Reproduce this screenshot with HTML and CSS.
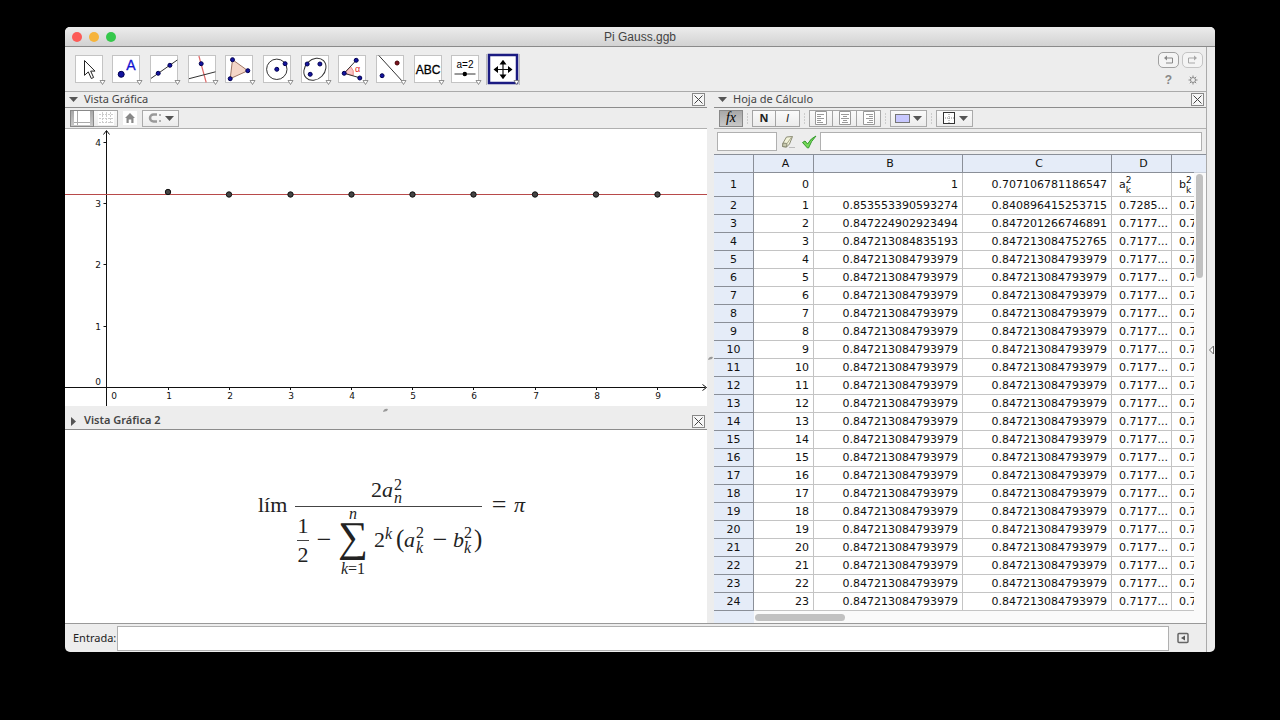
FILE: index.html
```html
<!DOCTYPE html>
<html lang="es">
<head>
<meta charset="utf-8">
<title>Pi Gauss.ggb</title>
<link rel="stylesheet" href="styles.css">
</head>
<body>
<div class="window">
  <header class="titlebar">
    <div class="lights"><span class="light close"></span><span class="light minimize"></span><span class="light zoom"></span></div>
    <h1>Pi Gauss.ggb</h1>
  </header>
  <div class="frame">
    <div class="app">
      <div class="toolbar">
        <div class="tools">
          <button class="tool" aria-label="Elige y mueve"><svg viewBox="0 0 36 36"><rect class="box" x="4.500" y="4.500" width="27" height="27"/><path d="M13.500 9.500V24.300L17.300 20.900L20.300 27.500L22.600 26.500L19.700 20.100H24Z" fill="#fff" stroke="#222"/><path class="drop" d="M29 29.500h5l-2.500 4z"/></svg></button>
          <button class="tool" aria-label="Punto"><svg viewBox="0 0 36 36"><rect class="box" x="4.500" y="4.500" width="27" height="27"/><circle class="pt" cx="13.200" cy="23.300" r="3"/><text class="tool-a" x="23" y="19">A</text><path class="drop" d="M29 29.500h5l-2.500 4z"/></svg></button>
          <button class="tool" aria-label="Recta"><svg viewBox="0 0 36 36"><rect class="box" x="4.500" y="4.500" width="27" height="27"/><path class="ink" d="M5 27.400L31.300 9"/><circle class="pt" cx="12.200" cy="22.300" r="2"/><circle class="pt" cx="23.900" cy="14.300" r="2"/><path class="drop" d="M29 29.500h5l-2.500 4z"/></svg></button>
          <button class="tool" aria-label="Perpendicular"><svg viewBox="0 0 36 36"><rect class="box" x="4.500" y="4.500" width="27" height="27"/><path d="M14.900 5L22.200 31.500" stroke="#e06a6a" stroke-width="1.200"/><path class="ink" d="M5 27.700L31.500 20.800"/><circle class="pt" cx="17.200" cy="12.700" r="2"/><path class="drop" d="M29 29.500h5l-2.500 4z"/></svg></button>
          <button class="tool" aria-label="Polígono"><svg viewBox="0 0 36 36"><rect class="box" x="4.500" y="4.500" width="27" height="27"/><path d="M11.500 8.700L26.800 19.700L9.200 27.700Z" fill="#f4d6c8" stroke="#9c7464"/><circle class="pt" cx="11.500" cy="8.700" r="2"/><circle class="pt" cx="26.800" cy="19.700" r="2"/><circle class="pt" cx="9.200" cy="27.700" r="2"/><path class="drop" d="M29 29.500h5l-2.500 4z"/></svg></button>
          <button class="tool" aria-label="Circunferencia"><svg viewBox="0 0 36 36"><rect class="box" x="4.500" y="4.500" width="27" height="27"/><circle class="ink" cx="17.800" cy="18.300" r="10.200"/><circle class="pt" cx="17.800" cy="18.300" r="2"/><circle class="pt" cx="26.100" cy="12.700" r="2"/><path class="drop" d="M29 29.500h5l-2.500 4z"/></svg></button>
          <button class="tool" aria-label="Elipse"><svg viewBox="0 0 36 36"><rect class="box" x="4.500" y="4.500" width="27" height="27"/><ellipse class="ink" cx="17.900" cy="18.300" rx="12.200" ry="9.800" transform="rotate(-45 17.900 18.300)"/><circle class="pt" cx="10.200" cy="13" r="2"/><circle class="pt" cx="22.900" cy="13" r="2"/><circle class="pt" cx="13.200" cy="23.300" r="2"/><path class="drop" d="M29 29.500h5l-2.500 4z"/></svg></button>
          <button class="tool" aria-label="Ángulo"><svg viewBox="0 0 36 36"><rect class="box" x="4.500" y="4.500" width="27" height="27"/><path d="M10.200 22.300L16.500 15.500A9.300 9.300 0 0 1 19.200 24.500Z" fill="#fbc6c6" stroke="#e88"/><path class="ink" d="M22.200 9.300L10.200 22.300L26.500 27"/><circle class="pt" cx="10.200" cy="22.300" r="2"/><circle class="pt" cx="22.200" cy="9.300" r="2"/><circle class="pt" cx="25.800" cy="27" r="2"/><text class="tool-alpha" x="23.500" y="21">α</text><path class="drop" d="M29 29.500h5l-2.500 4z"/></svg></button>
          <button class="tool" aria-label="Simetría axial"><svg viewBox="0 0 36 36"><rect class="box" x="4.500" y="4.500" width="27" height="27"/><path class="ink" d="M6.800 4.500L31 31"/><circle cx="25.100" cy="12" r="2" fill="#7a1020" stroke="#400"/><circle class="pt" cx="10.100" cy="24.700" r="2"/><path class="drop" d="M29 29.500h5l-2.500 4z"/></svg></button>
          <button class="tool" aria-label="Texto"><svg viewBox="0 0 36 36"><rect class="box" x="4.500" y="4.500" width="27" height="27"/><text class="tool-abc" x="18" y="23">ABC</text><path class="drop" d="M29 29.500h5l-2.500 4z"/></svg></button>
          <button class="tool" aria-label="Deslizador"><svg viewBox="0 0 36 36"><rect class="box" x="4.500" y="4.500" width="27" height="27"/><text class="tool-slider" x="18" y="17">a=2</text><path class="ink" d="M7.500 23H28.500"/><circle cx="17.800" cy="23" r="2.200"/><path class="drop" d="M29 29.500h5l-2.500 4z"/></svg></button>
          <button class="tool" aria-label="Desplaza vista gráfica" aria-pressed="true"><svg viewBox="0 0 36 36"><path d="M1.500 3V34M34.500 3V34" stroke="#bbb"/><rect x="4" y="4" width="28" height="28" fill="#fff" stroke="#1b1b82" stroke-width="2.500"/><path d="M10 18.500H26M18 10.500V26.500" stroke="#111" stroke-width="1.200"/><path d="M18 8.800l3.500 4.700h-7zM18 28.200l3.500-4.700h-7zM8.500 18.500l4.500-3.500v7zM27.500 18.500l-4.500-3.500v7z"/><path class="drop" d="M29 29.500h5l-2.500 4z"/></svg></button>
        </div>
        <div class="actions">
          <button class="history" aria-label="Deshace"><svg viewBox="0 0 13 10"><path d="M4 3H10.500V8H4" fill="none" stroke="#888"/><path d="M2 3l3-2.500v5z" fill="#888"/></svg></button>
          <button class="history faint" aria-label="Rehace"><svg viewBox="0 0 13 10"><path d="M9 3H2.500V8H9" fill="none" stroke="#888"/><path d="M11 3l-3-2.500v5z" fill="#888"/></svg></button>
          <button class="plain help">?</button>
          <button class="plain" aria-label="Preferencias"><svg class="gear" viewBox="0 0 10 10"><circle cx="5" cy="5" r="2.500" fill="none" stroke="#888"/><path d="M5 0.500V2.300M5 7.700V9.500M0.500 5H2.300M7.700 5H9.500M1.800 1.800L3 3M7 7L8.200 8.200M8.200 1.800L7 3M3 7L1.800 8.200" stroke="#888"/></svg></button>
        </div>
      </div>

      <main class="panels">
        <div class="views">
          <section class="view">
            <div class="view-title">
              <button class="toggle" aria-label="Plegar"><svg viewBox="0 0 9 9"><path d="M0 2h9l-4.500 5z"/></svg></button>
              <h2>Vista Gráfica</h2>
              <button class="shut" aria-label="Cerrar"><svg viewBox="0 0 11 11"><path d="M1.500 1.500l8 8M9.500 1.500l-8 8"/></svg></button>
            </div>
            <div class="stylebar">
              <div class="group">
                <button class="style pressed" aria-label="Ejes"><svg viewBox="0 0 18 14"><rect x="1" width="16" height="14" fill="#fff"/><path d="M4.500 0V14M1 11.500H17" stroke="#aaa"/></svg></button>
                <button class="style" aria-label="Cuadrícula"><svg viewBox="0 0 18 14"><rect x="1" width="16" height="14" fill="#fff"/><path d="M5.500 1V13M9.500 1V13M13.500 1V13M2 3.500H16M2 7.500H16M2 11.500H16" stroke="#ccc" stroke-dasharray="2 1"/></svg></button>
              </div>
              <button class="home" aria-label="Vista estándar"><svg viewBox="0 0 14 14"><rect width="14" height="14" fill="#fff"/><path d="M7 2L12 7H10.500V12H8.300V8.500H5.700V12H3.500V7H2Z" fill="#888"/></svg></button>
              <button class="pick" aria-label="Captura de puntos"><svg viewBox="0 0 15 12"><path d="M10 2.500H6.500a3.500 3.500 0 0 0 0 7H10" fill="none" stroke="#999" stroke-width="2.500"/><path d="M13 2V4M13 8V10" stroke="#999" stroke-width="1.500"/></svg><svg class="caret" viewBox="0 0 9 5"><path d="M0 0h9L4.500 5z"/></svg></button>
            </div>
            <svg class="graph" viewBox="0 0 642 277">
              <g class="axes">
                <path d="M41.500 277V2M38.500 5.500l3-4 3 4M0 258.500H640.500M637.500 255.500l4 3-4 3"/>
                <path d="M38.500 13.500h3M38.500 74.500h3M38.500 135.500h3M38.500 197.500h3M103.500 258v3M164.500 258v3M225.500 258v3M286.500 258v3M347.500 258v3M408.500 258v3M470.500 258v3M531.500 258v3M592.500 258v3"/>
              </g>
              <path d="M0 65.500H642" stroke="#b84a4a"/>
              <g class="dots"><circle cx="103" cy="63" r="2.700"/><circle cx="164" cy="65.500" r="2.700"/><circle cx="225.500" cy="65.500" r="2.700"/><circle cx="286.500" cy="65.500" r="2.700"/><circle cx="347.500" cy="65.500" r="2.700"/><circle cx="408.500" cy="65.500" r="2.700"/><circle cx="470" cy="65.500" r="2.700"/><circle cx="531" cy="65.500" r="2.700"/><circle cx="592.500" cy="65.500" r="2.700"/></g>
              <g class="ticks"><text x="33" y="17">4</text><text x="33" y="78">3</text><text x="33" y="139">2</text><text x="33" y="201">1</text><text x="33" y="256">0</text><text x="49" y="270">0</text><text x="104" y="270">1</text><text x="165" y="270">2</text><text x="226" y="270">3</text><text x="287" y="270">4</text><text x="348" y="270">5</text><text x="409" y="270">6</text><text x="471" y="270">7</text><text x="532" y="270">8</text><text x="593" y="270">9</text></g>
            </svg>
          </section>
          <section class="view second">
            <div class="grip"><svg viewBox="0 0 6 4"><path d="M0 4Q1 0 5 1L4 3Z"/></svg></div>
            <div class="view-title">
              <button class="toggle" aria-label="Desplegar"><svg viewBox="0 0 9 9"><path d="M2 0v9l5-4.500z"/></svg></button>
              <h2 class="active">Vista Gráfica 2</h2>
              <button class="shut" aria-label="Cerrar"><svg viewBox="0 0 11 11"><path d="M1.500 1.500l8 8M9.500 1.500l-8 8"/></svg></button>
            </div>
            <div class="formula">
              <svg viewBox="-9 0 290 115">
                <path d="M45 37.500H232M47 71.500H59" stroke="#444"/>
                <text x="8" y="43">lím</text>
                <text x="121" y="28">2</text><text class="var" x="132" y="28">a</text><text class="small" x="144" y="21">2</text><text class="small var" x="144" y="34">n</text>
                <text class="mid" x="53" y="64">1</text><text class="mid" x="53" y="93">2</text><text class="mid wide" x="74" y="79">−</text>
                <text class="sum mid" x="103" y="82">∑</text>
                <text class="small var mid" x="103" y="50">n</text>
                <text class="small mid" x="103" y="105"><tspan class="var">k</tspan>=1</text>
                <text x="124" y="78">2</text><text class="small var" x="135" y="70">k</text><text class="paren" x="146" y="78">(</text>
                <text class="var" x="154" y="78">a</text><text class="small" x="166" y="69">2</text><text class="small var" x="166" y="84">k</text>
                <text class="mid wide" x="190" y="79">−</text>
                <text class="var" x="203" y="78">b</text><text class="small" x="214" y="69">2</text><text class="small var" x="214" y="84">k</text><text class="paren" x="224" y="78">)</text>
                <text class="mid wide" x="249" y="44">=</text><text class="var" x="264" y="43">π</text>
              </svg>
            </div>
          </section>
        </div>

        <div class="divider"><svg viewBox="0 0 6 4"><path d="M0 4Q1 0 5 1L4 3Z"/></svg></div>

        <section class="view">
          <div class="view-title">
            <button class="toggle" aria-label="Plegar"><svg viewBox="0 0 9 9"><path d="M0 2h9l-4.500 5z"/></svg></button>
            <h2>Hoja de Cálculo</h2>
            <button class="shut" aria-label="Cerrar"><svg viewBox="0 0 11 11"><path d="M1.500 1.500l8 8M9.500 1.500l-8 8"/></svg></button>
          </div>
          <div class="stylebar">
            <button class="style pressed fx">fx</button>
            <span class="dotted"></span>
            <div class="group"><button class="style bold">N</button><button class="style slant">I</button></div>
            <span class="dotted"></span>
            <div class="group">
              <button class="style" aria-label="Izquierda"><svg viewBox="0 0 18 14"><path class="page" d="M3.500 0.500h11v13h-11z"/><path class="lines" d="M5 3.500h7M5 5.500h4M5 7.500h7M5 9.500h4M5 11.500h6"/></svg></button>
              <button class="style" aria-label="Centro"><svg viewBox="0 0 18 14"><path class="page" d="M3.500 0.500h11v13h-11z"/><path class="lines" d="M5 3.500h8M7 5.500h4M5 7.500h8M7 9.500h4M6 11.500h6"/></svg></button>
              <button class="style" aria-label="Derecha"><svg viewBox="0 0 18 14"><path class="page" d="M3.500 0.500h11v13h-11z"/><path class="lines" d="M6 3.500h7M9 5.500h4M6 7.500h7M9 9.500h4M7 11.500h6"/></svg></button>
            </div>
            <span class="dotted"></span>
            <button class="pick" aria-label="Color de fondo"><svg viewBox="0 0 15 12"><rect x="0.500" y="2.500" width="14" height="8" fill="#c8c8ff" stroke="#777"/></svg><svg class="caret" viewBox="0 0 9 5"><path d="M0 0h9L4.500 5z"/></svg></button>
            <span class="dotted"></span>
            <button class="pick" aria-label="Bordes"><svg viewBox="0 0 15 12"><rect x="2.500" y="0.500" width="11" height="11" fill="#fff" stroke="#333"/><path d="M8 2V11M4 6H13" stroke="#888" stroke-dasharray="1 1"/></svg><svg class="caret" viewBox="0 0 9 5"><path d="M0 0h9L4.500 5z"/></svg></button>
          </div>
          <div class="entry">
            <input class="cell-name" type="text" aria-label="Celda">
            <button class="plain" aria-label="Borrar"><svg class="mark" viewBox="0 0 16 16"><path d="M6.500 3L12.500 2.500L9.500 10L6.500 13L2.500 12.500L3 9Z" fill="#f2f3da" stroke="#8a8b74"/><path d="M3 9L7 9.500L6.500 13L2.500 12.500Z" fill="#c9cbb0" stroke="#8a8b74"/><path d="M7 9.500L12 2.500" stroke="#aaa98c"/><path d="M9 13.500H15" stroke="#bbb"/></svg></button>
            <button class="plain" aria-label="Aceptar"><svg class="mark" viewBox="0 0 16 16"><path d="M1.500 8.500L4 7L6.500 10Q10 4 15 2Q10 7 7.500 14H6.500Z" fill="#74d858" stroke="#349a2c"/></svg></button>
            <input class="cell-value" type="text" aria-label="Contenido de la celda">
          </div>
          <div class="sheet">
            <div class="cells">
              <table>
                <colgroup><col class="c-num"><col class="c-narrow"><col class="c-wide"><col class="c-wide"><col class="c-narrow"><col class="c-narrow"></colgroup>
                <thead><tr><th></th><th>A</th><th>B</th><th>C</th><th>D</th><th></th></tr></thead>
                <tbody>
                  <tr class="tall"><th>1</th><td>0</td><td>1</td><td>0.707106781186547</td><td>a<span class="index"><span>2</span><span>k</span></span></td><td>b<span class="index"><span>2</span><span>k</span></span></td></tr>
                  <tr><th>2</th><td>1</td><td>0.853553390593274</td><td>0.840896415253715</td><td>0.7285...</td><td>0.7071...</td></tr>
                  <tr><th>3</th><td>2</td><td>0.847224902923494</td><td>0.847201266746891</td><td>0.7177...</td><td>0.7177...</td></tr>
                  <tr><th>4</th><td>3</td><td>0.847213084835193</td><td>0.847213084752765</td><td>0.7177...</td><td>0.7177...</td></tr>
                  <tr><th>5</th><td>4</td><td>0.847213084793979</td><td>0.847213084793979</td><td>0.7177...</td><td>0.7177...</td></tr>
                  <tr><th>6</th><td>5</td><td>0.847213084793979</td><td>0.847213084793979</td><td>0.7177...</td><td>0.7177...</td></tr>
                  <tr><th>7</th><td>6</td><td>0.847213084793979</td><td>0.847213084793979</td><td>0.7177...</td><td>0.7177...</td></tr>
                  <tr><th>8</th><td>7</td><td>0.847213084793979</td><td>0.847213084793979</td><td>0.7177...</td><td>0.7177...</td></tr>
                  <tr><th>9</th><td>8</td><td>0.847213084793979</td><td>0.847213084793979</td><td>0.7177...</td><td>0.7177...</td></tr>
                  <tr><th>10</th><td>9</td><td>0.847213084793979</td><td>0.847213084793979</td><td>0.7177...</td><td>0.7177...</td></tr>
                  <tr><th>11</th><td>10</td><td>0.847213084793979</td><td>0.847213084793979</td><td>0.7177...</td><td>0.7177...</td></tr>
                  <tr><th>12</th><td>11</td><td>0.847213084793979</td><td>0.847213084793979</td><td>0.7177...</td><td>0.7177...</td></tr>
                  <tr><th>13</th><td>12</td><td>0.847213084793979</td><td>0.847213084793979</td><td>0.7177...</td><td>0.7177...</td></tr>
                  <tr><th>14</th><td>13</td><td>0.847213084793979</td><td>0.847213084793979</td><td>0.7177...</td><td>0.7177...</td></tr>
                  <tr><th>15</th><td>14</td><td>0.847213084793979</td><td>0.847213084793979</td><td>0.7177...</td><td>0.7177...</td></tr>
                  <tr><th>16</th><td>15</td><td>0.847213084793979</td><td>0.847213084793979</td><td>0.7177...</td><td>0.7177...</td></tr>
                  <tr><th>17</th><td>16</td><td>0.847213084793979</td><td>0.847213084793979</td><td>0.7177...</td><td>0.7177...</td></tr>
                  <tr><th>18</th><td>17</td><td>0.847213084793979</td><td>0.847213084793979</td><td>0.7177...</td><td>0.7177...</td></tr>
                  <tr><th>19</th><td>18</td><td>0.847213084793979</td><td>0.847213084793979</td><td>0.7177...</td><td>0.7177...</td></tr>
                  <tr><th>20</th><td>19</td><td>0.847213084793979</td><td>0.847213084793979</td><td>0.7177...</td><td>0.7177...</td></tr>
                  <tr><th>21</th><td>20</td><td>0.847213084793979</td><td>0.847213084793979</td><td>0.7177...</td><td>0.7177...</td></tr>
                  <tr><th>22</th><td>21</td><td>0.847213084793979</td><td>0.847213084793979</td><td>0.7177...</td><td>0.7177...</td></tr>
                  <tr><th>23</th><td>22</td><td>0.847213084793979</td><td>0.847213084793979</td><td>0.7177...</td><td>0.7177...</td></tr>
                  <tr><th>24</th><td>23</td><td>0.847213084793979</td><td>0.847213084793979</td><td>0.7177...</td><td>0.7177...</td></tr>
                </tbody>
              </table>
            </div>
            <div class="vscroll"><div class="vcap"></div><div class="vthumb"></div></div>
            <div class="hscroll"><div class="hcap"></div><div class="hthumb"></div></div>
          </div>
        </section>
      </main>

      <footer class="inputbar">
        <label for="entrada">Entrada:</label>
        <input id="entrada" type="text">
        <button class="plain" aria-label="Lista de comandos"><svg class="list" viewBox="0 0 12 12"><rect x="1" y="1.500" width="10" height="9" rx="1" fill="none" stroke="#666" stroke-width="1.500"/><path d="M8 3.500v5L4 6z" fill="#555"/></svg></button>
      </footer>
    </div>
    <aside class="side"><button class="plain" aria-label="Mostrar barra lateral"><svg viewBox="0 0 7 10"><path d="M5.500 1v8L1.500 5z" fill="#fff" stroke="#666"/></svg></button></aside>
  </div>
</div>
</body>
</html>
```
FILE: styles.css
```css
* { box-sizing: border-box; }
body {
  margin: 0;
  min-height: 100vh;
  padding: 27px 65px 68px;
  display: flex;
  flex-direction: column;
  background: #000;
  color: #222;
  font: 11px/14px "Noto Sans", "Open Sans", sans-serif;
}
h1, h2 { margin: 0; font-size: inherit; font-weight: 400; }
button, input { margin: 0; padding: 0; font: inherit; color: inherit; }
button { border: 0; background: none; display: flex; align-items: center; justify-content: center; }
input { border: 1px solid #b0b0b0; background: #fff; min-width: 0; padding: 0 4px; border-radius: 0; }
svg { display: block; }

.window { flex: 1; display: flex; flex-direction: column; background: #ededed; border-radius: 5px; overflow: hidden; }
.titlebar {
  height: 20px;
  display: grid;
  grid-template-columns: 1fr auto 1fr;
  align-items: center;
  background: linear-gradient(#ececec, #d2d2d2);
  border-bottom: 1px solid #8a8a8a;
}
.titlebar h1 { font: 12px/18px "Liberation Sans", sans-serif; color: #444; }
.lights { display: flex; gap: 7px; padding-left: 7px; }
.light { width: 10px; height: 10px; border-radius: 50%; }
.close { background: #fc5b57; }
.minimize { background: #f6b43c; }
.zoom { background: #35c84b; }

.frame { flex: 1; display: flex; }
.app { flex: 1; min-width: 0; display: flex; flex-direction: column; }
.side { width: 9px; border-left: 1px solid #aaa; display: flex; align-items: center; justify-content: center; }
.side svg { width: 7px; height: 10px; }

.toolbar { height: 45px; display: flex; align-items: center; justify-content: space-between; padding: 0 3px 0 5px; border-bottom: 1px solid #aaa; }
.tools { width: 452px; display: grid; grid-template-columns: repeat(12, 1fr); }
.tool svg { width: 36px; height: 36px; overflow: visible; }
.box { fill: #fff; stroke: #c4c4c4; }
.drop { fill: #fff; stroke: #777; stroke-width: 0.8; }
.ink { fill: none; stroke: #333; }
.pt { fill: #1414a0; stroke: #000050; }
.tool text { text-anchor: middle; font-family: "Liberation Sans", sans-serif; }
.tool .tool-a { font-size: 14px; fill: #1010d0; stroke: #1010d0; stroke-width: 0.3; }
.tool .tool-alpha { font-size: 9px; fill: #e02020; }
.tool .tool-abc { font-size: 12px; fill: #000; stroke: #000; stroke-width: 0.3; }
.tool .tool-slider { font-size: 10px; fill: #000; }
.actions { display: grid; grid-template-columns: 21px 21px; gap: 5px 3px; }
.history { height: 16px; border: 1px solid #a0a0a0; border-radius: 5px; background: #f4f4f4; }
.history svg { width: 13px; height: 10px; }
.faint { border-color: #c4c4c4; }
.faint svg { opacity: 0.7; }
.help { font: 700 12px/14px "Liberation Sans", sans-serif; color: #888; }
.gear { width: 10px; height: 10px; }

.panels { flex: 1; display: grid; grid-template-columns: minmax(0, 642fr) 7px minmax(0, 492fr); }
.views, .view { display: flex; flex-direction: column; min-width: 0; }
.second { flex: 1; }
.view-title { height: 16px; display: flex; align-items: center; padding: 0 2px 0 4px; border-bottom: 1px solid #8c8c8c; color: #444; }
.view-title h2 { flex: 1; padding: 0 0 2px 6px; }
.view-title .active { font-weight: 600; }
.toggle svg { width: 9px; height: 9px; fill: #555; }
.shut { width: 13px; height: 13px; border: 1px solid #888; background: #f6f6f6; }
.shut svg { width: 11px; height: 11px; stroke: #444; fill: none; }
.stylebar { height: 21px; display: flex; align-items: center; padding-left: 5px; border-bottom: 1px solid #b0b0b0; }
.group { display: flex; }
.style { width: 24px; height: 17px; border: 1px solid #a4a4a4; background: linear-gradient(#fafafa, #ececec); }
.group .style + .style { border-left: 0; }
.style svg { width: 18px; height: 14px; }
.pressed { background: linear-gradient(#a8a8a8, #c8c8c8); border-color: #888; }
.home { margin: 0 5px; }
.home svg { width: 14px; height: 14px; }
.pick { width: 37px; height: 17px; gap: 3px; border: 1px solid #aaa; background: linear-gradient(#fafafa, #ececec); }
.pick svg { width: 15px; height: 12px; }
.pick .caret { width: 9px; height: 5px; fill: #555; }
.fx { font: italic 14px/14px "Liberation Serif", serif; color: #000; }
.bold { font-weight: 700; }
.slant { font-family: "Liberation Sans", sans-serif; font-style: italic; }
.dotted { width: 9px; height: 12px; background: linear-gradient(#aaa 50%, transparent 50%) center / 1px 3px repeat-y; }
.page { fill: #fff; stroke: #999; }
.lines { stroke: #999; }

.graph { width: 100%; background: #fff; }
.axes { fill: none; stroke: #111; }
.dots { fill: #444; stroke: #111; }
.ticks { font: 9px "DejaVu Sans", sans-serif; text-anchor: middle; fill: #111; }
.grip { height: 7px; display: flex; align-items: center; justify-content: center; }
.grip svg, .divider svg { width: 6px; height: 4px; fill: #999; }
.divider { display: flex; align-items: center; justify-content: center; }
.second .view-title { height: 17px; }
.formula { flex: 1; display: flex; align-items: center; justify-content: center; background: #fff; }
.formula svg { width: 290px; height: 115px; }
.formula text { font: 22px "Liberation Serif", serif; fill: #222; }
.formula .var, .formula tspan { font-style: italic; }
.formula .small { font-size: 16px; }
.formula .paren { font-size: 25px; }
.formula .wide { font-size: 26px; }
.formula .sum { font-size: 42px; }
.formula .mid { text-anchor: middle; }

.entry { height: 25px; display: flex; align-items: center; gap: 3px; padding: 0 4px 0 3px; }
.entry input { height: 19px; }
.cell-name { width: 60px; }
.cell-value { flex: 1; }
.entry .plain + .plain { margin-left: 2px; }
.mark { width: 16px; height: 16px; }
.sheet { flex: 1; display: grid; grid-template-columns: minmax(0, 1fr) 12px; grid-template-rows: auto 1fr; border-top: 1px solid #8a8f98; background: #fff; }
.cells { overflow: hidden; }
table { table-layout: fixed; width: 518px; border-spacing: 0; font: 11px/14px "DejaVu Sans", sans-serif; color: #111; }
.c-num { width: 40px; }
.c-narrow { width: 60px; }
.c-wide { width: 149px; }
th, td { height: 18px; padding: 0 4px; overflow: hidden; white-space: nowrap; border-right: 1px solid #c4c4c4; border-bottom: 1px solid #c4c4c4; }
th { background: #e5ecf8; font-weight: 400; border-color: #8a8f98; padding: 0; }
thead th { padding-left: 4px; }
td { text-align: right; }
td:nth-child(n+5) { text-align: left; padding: 0 0 0 7px; }
.tall th, .tall td { height: 24px; }
.index { display: inline-flex; flex-direction: column; vertical-align: middle; font-size: 9px; line-height: 10px; }
.vscroll { background: #fafafa; }
.vcap { height: 18px; background: #e5ecf8; border-bottom: 1px solid #ccd2dc; }
.vthumb { width: 7px; height: 104px; margin: 1px 0 0 2px; border-radius: 4px; background: #c1c1c1; }
.hscroll { grid-column: 1 / -1; min-height: 12px; display: flex; align-items: center; background: #fafafa; }
.hcap { width: 40px; align-self: stretch; background: #e5ecf8; }
.hthumb { width: 90px; height: 7px; margin-left: 1px; border-radius: 4px; background: #c1c1c1; }

.inputbar { height: 29px; display: flex; align-items: center; padding: 0 17px 0 8px; border-top: 1px solid #999; font-size: 11px; }
.inputbar label { width: 44px; }
.inputbar input { flex: 1; height: 25px; }
.inputbar button { margin-left: 8px; }
.list { width: 12px; height: 12px; }
```
